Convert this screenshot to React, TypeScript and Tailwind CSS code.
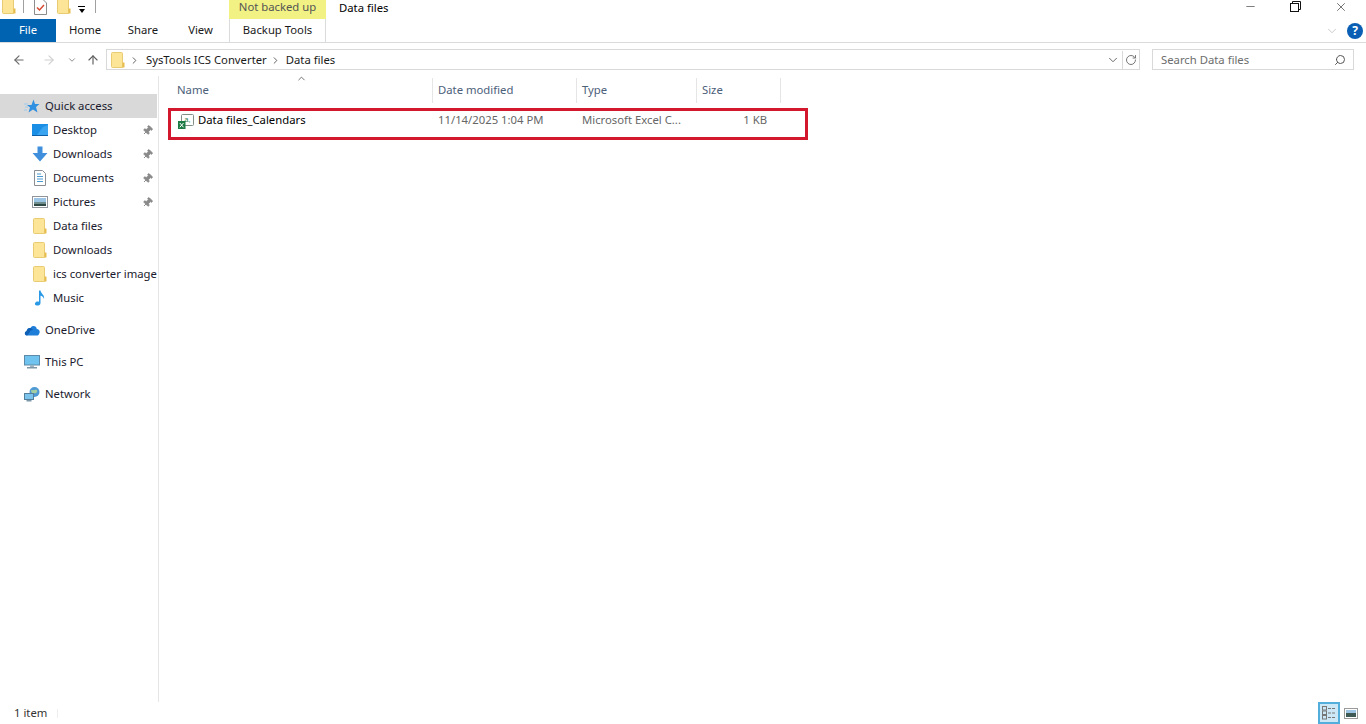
import React from "react";
import { ChevronDown, ChevronRight, ChevronUp, ArrowLeft, ArrowRight, ArrowUp, RotateCw, Search, Minus, X, Pin } from "lucide-react";

const FolderIcon = () => (
  <svg width="14" height="16" viewBox="0 0 14 16" className="shrink-0">
    <path d="M0.5 1.5 Q0.5 0.5 1.5 0.5 H10.5 Q11.5 0.5 11.5 1.5 V15.5 H1.5 Q0.5 15.5 0.5 14.5 Z" fill="#fde597" stroke="#e8cb72" />
    <path d="M11.5 10.5 H13.5 V15.5 H11.5 Z" fill="#e8bd4f" />
  </svg>
);

const DesktopIcon = () => (
  <svg width="16" height="12" viewBox="0 0 16 12">
    <rect width="16" height="12" fill="#1b8fe6" />
    <path d="M5 11 L11 3 L16 1 V11 Z" fill="#3ba4f0" />
    <rect y="11" width="16" height="1" fill="#0d5fa8" />
  </svg>
);

const DownloadIcon = () => (
  <svg width="16" height="16" viewBox="0 0 16 16">
    <path d="M5.5 0.5 H10.5 V7 H15.5 L8 15.5 L0.5 7 H5.5 Z" fill="#3f8fdc" />
  </svg>
);

const DocumentIcon = () => (
  <svg width="12" height="16" viewBox="0 0 12 16">
    <path d="M0.5 0.5 H8.5 L11.5 3.5 V15.5 H0.5 Z" fill="#fff" stroke="#8a8f96" />
    <path d="M3 4H7M3 6.5H9M3 9H9M3 11.5H9" stroke="#4a9ad0" strokeWidth="1" />
  </svg>
);

const PicturesIcon = () => (
  <svg width="16" height="12" viewBox="0 0 16 12">
    <rect x="0.5" y="0.5" width="15" height="11" fill="#fff" stroke="#8f959b" />
    <rect x="2" y="2" width="12" height="4" fill="#9cc4e4" />
    <rect x="2" y="6" width="12" height="2" fill="#6f8f8f" />
    <rect x="2" y="8" width="12" height="2" fill="#2f4a45" />
  </svg>
);

const MusicIcon = () => (
  <svg width="12" height="16" viewBox="0 0 12 16">
    <path d="M5 0.5 H6.5 C6.8 3.5 11 5 10 9 C9.5 7 8 6 6.5 5.8 V13 C6.5 15 4.5 15.8 2.5 15.5 C0.5 15 0.3 13 2 12 C3 11.4 4 11.4 5 11.8 Z" fill="#2b9ae6" />
  </svg>
);

const StarIcon = () => (
  <svg width="16" height="15" viewBox="0 0 16 15">
    <path d="M9.5 0.5 L11 5 H15.5 L12 8 L13.5 13.5 L9 10.5 L4.5 13.5 L6 8.5 L3 6 H7.5 Z" fill="#2f8fe0" />
    <path d="M0 5 H4 M1 8 H4 M0 11 H3" stroke="#9cc9ee" strokeWidth="1" />
  </svg>
);

const OneDriveIcon = () => (
  <svg width="16" height="11" viewBox="0 0 16 11">
    <path d="M3 10.5 C0.5 10.5 0 7 2.5 6.3 C3 3.5 5 2.5 6.5 3 C8 0 12.5 0.5 12.8 4 C15.5 4 16.5 7 15 9 C14.5 10 14 10.5 13 10.5 Z" fill="#1f7fd8" />
    <path d="M3 10.5 C0.5 10.5 0 7 2.5 6.3 C3 3.5 5 2.5 6.5 3 C7.5 3.2 8.5 4 9 5 C6 5 6 7.5 5 8 C4.5 9 4 10 3 10.5 Z" fill="#0f5fb5" />
  </svg>
);

const PcIcon = () => (
  <svg width="16" height="14" viewBox="0 0 16 14">
    <rect x="0.5" y="0.5" width="15" height="9.5" fill="#6fc3ee" stroke="#5d8aa8" />
    <rect x="6" y="10" width="4" height="2" fill="#9fb3c0" />
    <rect x="3" y="12" width="10" height="1.5" fill="#7d97a8" />
  </svg>
);

const NetworkIcon = () => (
  <svg width="16" height="15" viewBox="0 0 16 15">
    <circle cx="10.5" cy="5" r="5" fill="#4f9ad4" />
    <path d="M7 3 C9 4 11 2 13 3 C14 5 12 7 10 6 C9 7 7 6 7 3 Z" fill="#a5cfa0" />
    <rect x="0.5" y="6.5" width="9" height="6" fill="#7cc4ec" stroke="#55809c" />
    <rect x="2.5" y="13" width="5" height="1.5" fill="#7d97a8" />
  </svg>
);

const ChecklistIcon = () => (
  <svg width="13" height="16" viewBox="0 0 13 16">
    <path d="M0.5 0.5 H9 L12.5 4 V15.5 H0.5 Z" fill="#fff" stroke="#8c8c8c" />
    <path d="M3 8.5 L5.5 11 L10 6" fill="none" stroke="#d6492f" strokeWidth="1.5" />
  </svg>
);

const CsvIcon = () => (
  <svg width="16" height="15" viewBox="0 0 16 15">
    <rect x="3.5" y="0.5" width="12" height="11" rx="1" fill="#fff" stroke="#7f8f85" />
    <text x="6.5" y="8" fontSize="7" fill="#2a7a48" fontFamily="'Liberation Sans', sans-serif">a,</text>
    <rect x="0" y="7" width="7.5" height="8" fill="#1e7a45" />
    <path d="M1.8 9 L5.5 13.3 M5.5 9 L1.8 13.3" stroke="#fff" strokeWidth="1" />
  </svg>
);

const quickAccess = [
  { label: "Desktop", icon: <DesktopIcon />, pinned: true },
  { label: "Downloads", icon: <DownloadIcon />, pinned: true },
  { label: "Documents", icon: <DocumentIcon />, pinned: true },
  { label: "Pictures", icon: <PicturesIcon />, pinned: true },
  { label: "Data files", icon: <FolderIcon /> },
  { label: "Downloads", icon: <FolderIcon /> },
  { label: "ics converter image", icon: <FolderIcon /> },
  { label: "Music", icon: <MusicIcon /> },
];

const columns = [
  { label: "Name", width: "w-[262px]", pad: "pl-[6px]" },
  { label: "Date modified", width: "w-[144px]", pad: "pl-[5px]" },
  { label: "Type", width: "w-[120px]", pad: "pl-[5px]" },
  { label: "Size", width: "w-[84px]", pad: "pl-[5px]" },
];

const NavHeading = ({ icon, label, active }: { icon: React.ReactNode; label: string; active?: boolean }) => (
  <div className={`flex h-6 w-[157px] items-center ${active ? "bg-[#d9d9d9]" : ""}`}>
    <div className="flex w-[45px] justify-end pr-[5px]">{icon}</div>
    <span className="text-[#1a1a2e]">{label}</span>
  </div>
);

export default function App() {
  return (
    <div
      className="flex h-[724px] w-[1366px] flex-col overflow-hidden bg-white text-[11.3px] text-[#1a1a1a]"
      style={{ fontFamily: "'Noto Sans', sans-serif" }}
    >
      {/* title bar */}
      <div className="flex h-[19px] items-start">
        <div className="flex w-[229px] items-start pl-[2px]">
          <div className="-mt-[2px] flex h-[17px] items-start">
            <FolderIcon />
          </div>
          <div className="ml-[7px] h-[13px] w-px bg-[#a0a0a0]" />
          <div className="ml-[10px] -mt-px">
            <ChecklistIcon />
          </div>
          <div className="ml-[10px] -mt-[2px]">
            <FolderIcon />
          </div>
          <div className="ml-[7px] mt-[6px] flex flex-col items-center">
            <div className="h-px w-[7px] bg-black" />
            <div className="mt-[2px] h-0 w-0 border-x-[3.5px] border-t-[4px] border-x-transparent border-t-black" />
          </div>
          <div className="ml-[10px] h-[13px] w-px bg-[#a0a0a0]" />
        </div>
        <div className="flex h-[19px] w-[97px] items-center justify-center bg-[#f1f184] pb-[5px] text-[#555]">Not backed up</div>
        <div className="ml-[13px] text-black">Data files</div>
        <div className="ml-auto flex items-start pr-[2px]">
          <div className="flex w-[46px] justify-center">
            <Minus size={13} strokeWidth={1} color="#111" />
          </div>
          <div className="flex w-[45px] justify-center pt-px">
            <svg width="11" height="11" viewBox="0 0 11 11" fill="none" stroke="#111">
              <rect x="0.5" y="2.5" width="8" height="8" fill="#fff" />
              <path d="M2.5 2.5 V0.5 H10.5 V8.5 H8.5" />
            </svg>
          </div>
          <div className="flex w-[46px] justify-center">
            <X size={14} strokeWidth={1} color="#111" />
          </div>
        </div>
      </div>

      {/* ribbon tabs */}
      <div className="flex h-[24px] border-b border-[#dadbdc]">
        <div className="flex w-[56px] items-center justify-center bg-[#0063b1] text-white">File</div>
        <div className="flex w-[58px] items-center justify-center">Home</div>
        <div className="flex w-[58px] items-center justify-center">Share</div>
        <div className="flex w-[57px] items-center justify-center">View</div>
        <div className="flex w-[97px] items-center justify-center border-x border-[#dadbdc]">Backup Tools</div>
        <div className="ml-auto flex items-center pr-[3px]">
          <ChevronDown size={14} strokeWidth={1.2} color="#b4b4b4" />
          <div className="ml-[8px] flex h-4 w-4 items-center justify-center rounded-full bg-[#0a5fb4] text-[12px] font-bold text-white">?</div>
        </div>
      </div>

      {/* address bar */}
      <div className="flex h-[33px] items-center">
        <div className="flex w-[106px] items-center pl-[12px]">
          <ArrowLeft size={14} color="#6d6d6d" strokeWidth={2} />
          <ArrowRight size={14} color="#d0d0d0" strokeWidth={2} className="ml-[16px]" />
          <ChevronDown size={10} color="#777" strokeWidth={2} className="ml-[11px]" />
          <ArrowUp size={14} color="#5f5f5f" strokeWidth={2} className="ml-[9px]" />
        </div>
        <div className="flex h-[21px] w-[1034px] items-center border border-[#d9d9d9] pt-px">
          <div className="ml-[4px]">
            <FolderIcon />
          </div>
          <ChevronRight size={11} color="#555" className="ml-[4px]" />
          <span className="ml-[6px]">SysTools ICS Converter</span>
          <ChevronRight size={11} color="#555" className="ml-[3px]" />
          <span className="ml-[5px]">Data files</span>
          <div className="ml-auto flex h-full items-center">
            <ChevronDown size={14} color="#555" strokeWidth={1.5} className="mr-[2px]" />
            <div className="flex h-full w-[17px] items-center justify-center border-l border-[#d9d9d9]">
              <RotateCw size={12} color="#777" />
            </div>
          </div>
        </div>
        <div className="ml-[12px] flex h-[21px] w-[202px] items-center justify-between border border-[#d9d9d9] pl-2 pr-[7px] pt-px text-[#6d6d6d]">
          <span>Search Data files</span>
          <Search size={12} color="#555" className="-scale-x-100" />
        </div>
      </div>

      {/* main */}
      <div className="flex min-h-0 flex-1">
        <nav className="flex w-[159px] shrink-0 flex-col border-r border-[#e6e6e6] pt-[18px]">
          <NavHeading icon={<StarIcon />} label="Quick access" active />
          {quickAccess.map((item, i) => (
            <div key={i} className="flex h-6 items-center">
              <div className="ml-[32px] flex w-[16px] shrink-0 justify-center">{item.icon}</div>
              <span className="ml-[5px] whitespace-nowrap text-[#1a1a2e]">{item.label}</span>
              {item.pinned && <Pin size={11} color="#8a8a8a" fill="#8a8a8a" className="ml-auto mr-[5px] rotate-45" />}
            </div>
          ))}
          <div className="mt-2 flex flex-col gap-2">
            <NavHeading icon={<OneDriveIcon />} label="OneDrive" />
            <NavHeading icon={<PcIcon />} label="This PC" />
            <NavHeading icon={<NetworkIcon />} label="Network" />
          </div>
        </nav>
        <div className="relative flex-1">
          <ChevronUp size={11} color="#666" className="absolute left-[137px] top-[-3px]" />
          <div className="ml-[12px] mb-[3px] flex h-[29px] items-center">
            {columns.map((col) => (
              <div key={col.label} className={`flex h-[25px] items-center border-r border-[#e5e5e5] text-[#4c607a] ${col.width} ${col.pad}`}>
                {col.label}
              </div>
            ))}
          </div>
          <div className="ml-[9px] flex h-[32px] w-[640px] items-center border-[3px] border-[#d3182e] pb-[8px]">
            <div className="flex w-[267px] items-center pl-[7px]">
              <div className="mt-[3px]">
                <CsvIcon />
              </div>
              <span className="ml-[4px] text-black">Data files_Calendars</span>
            </div>
            <div className="w-[144px] text-[#666]">11/14/2025 1:04 PM</div>
            <div className="w-[120px] text-[#666]">Microsoft Excel C...</div>
            <div className="w-[65px] text-right text-[#666]">1 KB</div>
          </div>
        </div>
      </div>

      {/* status bar */}
      <div className="flex h-[22px] shrink-0 items-center pl-[14px] text-[#333]">
        <span>1 item</span>
        <div className="ml-[10px] h-[9px] w-px bg-[#eeeeee]" />
        <div className="ml-auto flex items-center pr-[8px]">
          <div className="flex h-[22px] w-[22px] items-center justify-center border-2 border-[#53aedb] bg-[#cce8f7]">
            <svg width="14" height="14" viewBox="0 0 14 14" fill="none" stroke="#777">
              <rect x="0.5" y="0.5" width="4" height="3.5" />
              <rect x="0.5" y="5" width="4" height="3.5" />
              <rect x="0.5" y="9.5" width="4" height="3.5" />
              <path d="M6 2.5H9M10 2.5H13M6 7H9M10 7H13M6 11.5H9M10 11.5H13" />
            </svg>
          </div>
          <div className="ml-[4px]">
            <svg width="14" height="11" viewBox="0 0 14 11">
              <rect x="0.5" y="0.5" width="13" height="10" fill="#fff" stroke="#9a9a9a" />
              <rect x="2" y="2" width="10" height="3" fill="#9cc4e4" />
              <rect x="2" y="5" width="10" height="4" fill="#3f5a55" />
            </svg>
          </div>
        </div>
      </div>
    </div>
  );
}
